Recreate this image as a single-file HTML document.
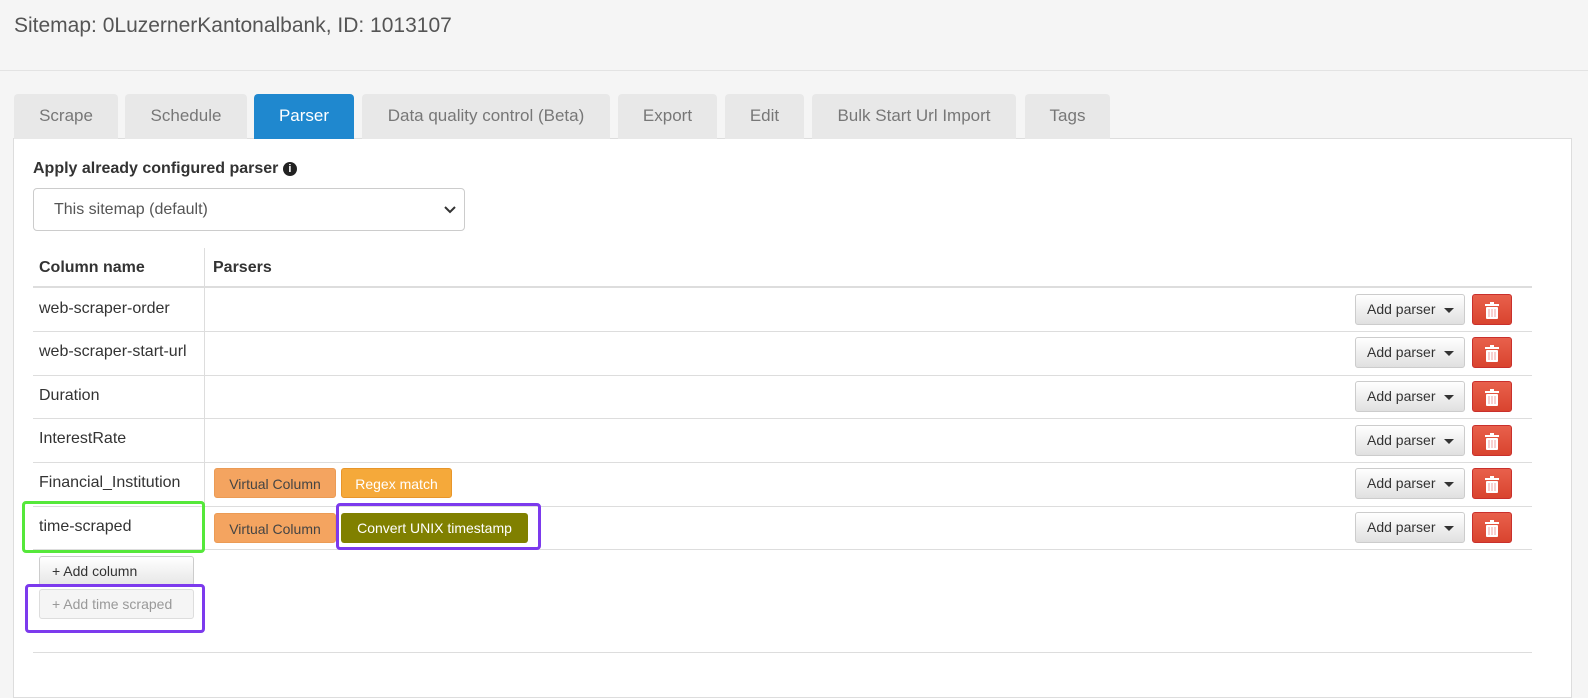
<!DOCTYPE html>
<html><head><meta charset="utf-8"><style>
*{box-sizing:border-box}
body{margin:0;width:1588px;height:682px;background:#f5f5f5;font-family:"Liberation Sans",sans-serif;color:#333;position:relative;overflow:hidden}
.hdr{position:absolute;left:0;top:0;width:1588px;height:71px;border-bottom:1px solid #e3e3e3}
.title{position:absolute;left:14px;top:14px;font-size:21px;color:#555}
.tab{position:absolute;top:94px;height:45px;background:#e8e8e8;border-radius:4px 4px 0 0;color:#777;font-size:17px;text-align:center;line-height:43px}
.tab.act{background:#1f88cf;color:#fff}
.panel{position:absolute;left:13px;top:138px;width:1559px;height:560px;background:#fff;border:1px solid #ddd}
.abs{position:absolute}
.lbl{left:33px;top:160px;font-weight:bold;font-size:16px}
.sel{left:33px;top:188px;width:432px;height:43px;border:1px solid #ccc;border-radius:4px;font-size:16px;color:#555;padding:12px 0 0 20px}
.hline{position:absolute;left:33px;width:1499px;height:1px;background:#ddd}
.cell{position:absolute;left:39px;font-size:16px;color:#333}
.ap{position:absolute;left:1355px;width:110px;height:31px;border:1px solid #ccc;border-radius:3px;background:linear-gradient(#fff,#e0e0e0);font-size:14px;color:#333;line-height:29px;padding-left:11px}
.ap:after{content:"";position:absolute;left:88px;top:13px;border:5px solid transparent;border-top:5px solid #333;border-bottom:0}
.del{position:absolute;left:1472px;width:40px;height:31px;border-radius:3px;background:linear-gradient(#e8604c,#d9442f);border:1px solid #c9302c}
.tag{position:absolute;height:30px;border-radius:3px;font-size:14px;line-height:30px;text-align:center}
.vc{background:#f4a460;color:#444;border:1px solid #eb9b55}
.rm{background:#f5a93a;color:#fff;border:1px solid #e8962a}
.cu{background:#808000;color:#fff}
.btn{position:absolute;left:39px;width:155px;height:30px;border:1px solid #ccc;border-radius:3px;background:linear-gradient(#fff,#e6e6e6);font-size:14px;padding:6px 0 0 12px}
</style></head><body>
<div class="hdr"><div class="title">Sitemap: 0LuzernerKantonalbank, ID: 1013107</div></div>
<div class="panel"></div>
<div class="tab" style="left:14px;width:104px">Scrape</div>
<div class="tab" style="left:125px;width:122px">Schedule</div>
<div class="tab act" style="left:254px;width:100px">Parser</div>
<div class="tab" style="left:362px;width:248px">Data quality control (Beta)</div>
<div class="tab" style="left:618px;width:99px">Export</div>
<div class="tab" style="left:725px;width:79px">Edit</div>
<div class="tab" style="left:812px;width:204px">Bulk Start Url Import</div>
<div class="tab" style="left:1025px;width:85px">Tags</div>
<div class="abs lbl">Apply already configured parser <span style="display:inline-block;width:14px;height:14px;border-radius:50%;background:#222;color:#fff;font-size:11px;text-align:center;line-height:14px;vertical-align:1px">i</span></div>
<div class="abs sel">This sitemap (default)<svg style="position:absolute;right:8px;top:17px" width="12" height="8"><path d="M1 1l5 5 5-5" stroke="#333" stroke-width="2" fill="none"/></svg></div>
<div class="abs" style="left:204px;top:248px;width:1px;height:302px;background:#ddd"></div>
<div class="cell" style="top:259px;font-weight:bold">Column name</div>
<div class="cell" style="left:213px;top:259px;font-weight:bold">Parsers</div>
<div class="hline" style="top:286px;height:2px"></div>
<div class="hline" style="top:331px"></div>
<div class="hline" style="top:375px"></div>
<div class="hline" style="top:418px"></div>
<div class="hline" style="top:462px"></div>
<div class="hline" style="top:506px"></div>
<div class="hline" style="top:549px"></div>
<div class="hline" style="top:652px"></div>
<div class="cell" style="top:300px">web-scraper-order</div>
<div class="cell" style="top:343px">web-scraper-start-url</div>
<div class="cell" style="top:387px">Duration</div>
<div class="cell" style="top:430px">InterestRate</div>
<div class="cell" style="top:474px">Financial_Institution</div>
<div class="cell" style="top:518px">time-scraped</div>
<div class="ap" style="top:294px">Add parser</div>
<div class="ap" style="top:337px">Add parser</div>
<div class="ap" style="top:381px">Add parser</div>
<div class="ap" style="top:425px">Add parser</div>
<div class="ap" style="top:468px">Add parser</div>
<div class="ap" style="top:512px">Add parser</div>
<div class="del" style="top:294px"></div>
<div class="del" style="top:337px"></div>
<div class="del" style="top:381px"></div>
<div class="del" style="top:425px"></div>
<div class="del" style="top:468px"></div>
<div class="del" style="top:512px"></div>
<svg class="abs" style="left:0;top:0" width="1588" height="682">
<defs><g id="t"><rect x="1485" y="304" width="14" height="2" fill="#fff"/><rect x="1490" y="302" width="4" height="2" fill="#fff"/><rect x="1486" y="307" width="12" height="12" rx="1" fill="#fff"/><path d="M1489 309v8M1492 309v8M1495 309v8" stroke="#f0a0a0" stroke-width="1"/></g></defs>
<use href="#t"/><use href="#t" y="43"/><use href="#t" y="87"/><use href="#t" y="131"/><use href="#t" y="174"/><use href="#t" y="218"/>
</svg>
<div class="tag vc" style="left:214px;top:468px;width:122px">Virtual Column</div>
<div class="tag rm" style="left:341px;top:468px;width:111px">Regex match</div>
<div class="tag vc" style="left:214px;top:513px;width:122px">Virtual Column</div>
<div class="tag cu" style="left:341px;top:513px;width:187px">Convert UNIX timestamp</div>
<div class="btn" style="top:556px">+ Add column</div>
<div class="btn" style="top:589px;color:#999;background:#f5f5f5;border-color:#ddd">+ Add time scraped</div>
<div class="abs" style="left:22px;top:501px;width:183px;height:52px;border:3px solid #55e83a;border-radius:4px"></div>
<div class="abs" style="left:336px;top:503px;width:205px;height:47px;border:3px solid #7c3aed;border-radius:4px"></div>
<div class="abs" style="left:25px;top:584px;width:180px;height:49px;border:3px solid #7c3aed;border-radius:4px"></div>
</body></html>
